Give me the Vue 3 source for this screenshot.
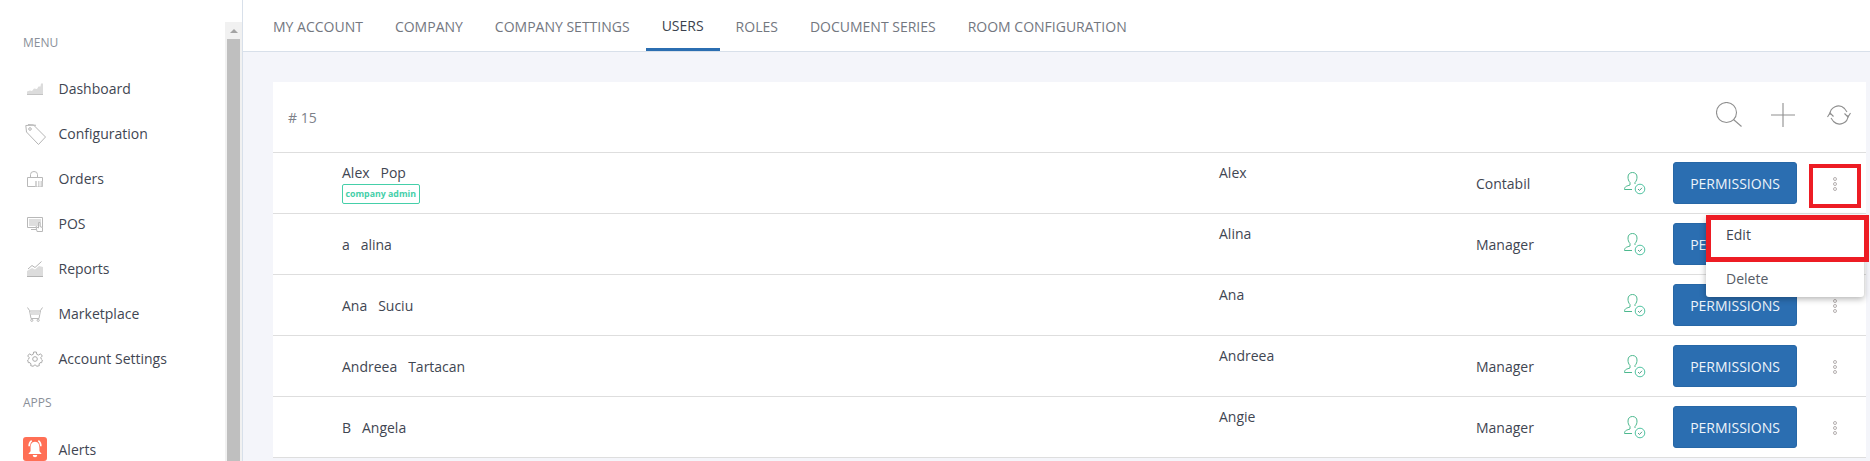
<script setup>
const menu = [
  { label: 'Dashboard', icon: 'dash' },
  { label: 'Configuration', icon: 'tag' },
  { label: 'Orders', icon: 'bag' },
  { label: 'POS', icon: 'pos' },
  { label: 'Reports', icon: 'reports' },
  { label: 'Marketplace', icon: 'cart' },
  { label: 'Account Settings', icon: 'gear' }
]
const tabs = ['MY ACCOUNT', 'COMPANY', 'COMPANY SETTINGS', 'USERS', 'ROLES', 'DOCUMENT SERIES', 'ROOM CONFIGURATION']
const users = [
  { first: 'Alex', last: 'Pop', nick: 'Alex', role: 'Contabil', admin: true },
  { first: 'a', last: 'alina', nick: 'Alina', role: 'Manager' },
  { first: 'Ana', last: 'Suciu', nick: 'Ana', role: '' },
  { first: 'Andreea', last: 'Tartacan', nick: 'Andreea', role: 'Manager' },
  { first: 'B', last: 'Angela', nick: 'Angie', role: 'Manager' }
]
</script>

<template>
  <div class="page">
    <aside class="sidebar">
      <div class="section first">MENU</div>
      <a v-for="m in menu" :key="m.label" class="nav">
        <span class="nav-icon">
          <svg v-if="m.icon === 'dash'" width="16" height="12" viewBox="0 0 16 12"><path d="M0 11V8.500L3 7.500 5 8 7 5.500 10 6 11.500 3.500 13.500 3.500 14 .5 16 .5V11z" fill="#dcdcdc"/><path d="M0 11.500H16" stroke="#c4c4c4"/></svg>
          <svg v-else-if="m.icon === 'tag'" width="21" height="21" viewBox="0 0 21 21" fill="none" stroke="#b4b4b4"><path d="M.8 1.500 8.500 1 20.500 13 13.500 20.500 1.500 8z"/><circle cx="5" cy="5" r="1.300"/><path d="M3 .6 11 1.300"/></svg>
          <svg v-else-if="m.icon === 'bag'" width="16" height="16" viewBox="0 0 16 16" fill="none" stroke="#b8b8b8"><path d="M.5 6.500H15.500V15.500H.5z"/><path d="M3.500 6.500V3.500a3.500 3 0 0 1 7 0V6.500"/><path d="M8 10H15.500V15.500H8z" fill="#d4d4d4" stroke="none"/><path d="M10.500 10V15.500M13 10V15.500" stroke="#fff"/></svg>
          <svg v-else-if="m.icon === 'pos'" width="16" height="15" viewBox="0 0 16 15" fill="none" stroke="#b8b8b8"><path d="M.5.5H15.500V10.500H.5z"/><path d="M2 2H14V9H2z" fill="#dedede" stroke="none"/><path d="M4 12.500H9"/><path d="M10 14.500 9 9.500 11.500 11V5.500H13V9.500L15.500 10.500V14.500z" fill="#fff"/></svg>
          <svg v-else-if="m.icon === 'reports'" width="16" height="16" viewBox="0 0 16 16"><path d="M0 15V10L5 7 8 8.500 12 5 16 6V15z" fill="#dcdcdc"/><path d="M1 8 5 4.500 8 6.500 14.500 .5" fill="none" stroke="#b4b4b4"/><path d="M0 15.500H16" stroke="#b4b4b4"/></svg>
          <svg v-else-if="m.icon === 'cart'" width="16" height="15" viewBox="0 0 16 15" fill="none" stroke="#b8b8b8"><path d="M.5.5 2.500 3.500 4 11.500H12L13.500 3.500 15.500.5"/><path d="M2.500 4H13.500"/><path d="M3.500 4.500H12.500V8H4z" fill="#dedede" stroke="none"/><circle cx="4.800" cy="13.300" r="1.100"/><circle cx="11.200" cy="13.300" r="1.100"/></svg>
          <svg v-else-if="m.icon === 'gear'" width="16" height="16" viewBox="0 0 24 24" fill="none" stroke="#aaa" stroke-width="1.500"><circle cx="12" cy="12" r="3.500"/><path d="M10 1.500H14L14.700 5 17.300 6.100 20.300 4.200 23 7.500 20.700 9.800 21.400 12 23 13.500 22 17.500 19.500 17.500 18 19.500 18.500 22 14.500 23 13 21H11L9.500 23 5.500 22 6 19.500 4.500 17.500 2 17.500 1 13.500 2.600 12 3.300 9.800 1 7.500 3.700 4.200 6.700 6.100 9.300 5z"/></svg>
        </span>
        <span>{{ m.label }}</span>
      </a>
      <div class="section apps">APPS</div>
      <a class="nav alerts">
        <span class="alert-icon">
          <svg width="20" height="20" viewBox="0 0 18 18" fill="#fff"><path d="M9 2.500C6 2.500 5 5 5 8V11L3 13.500H15L13 11V8C13 5 12 2.500 9 2.500z"/><path d="M7 14.500H11A2 2 0 0 1 7 14.500z"/><path d="M3.700 6.500A6 6 0 0 1 6 1.500M14.300 6.500A6 6 0 0 0 12 1.500" fill="none" stroke="#fff" stroke-width="1.400"/></svg>
        </span>
        <span>Alerts</span>
      </a>
      <div class="scrollbar">
        <div class="arrow"></div>
        <div class="thumb"></div>
      </div>
    </aside>

    <main class="main">
      <nav class="tabs">
        <a v-for="t in tabs" :key="t" class="tab" :class="{ active: t === 'USERS' }">{{ t }}</a>
      </nav>
      <section class="content">
        <div class="card">
          <header class="card-head">
            <span class="count"># 15</span>
            <div class="tools">
              <svg width="26" height="25" viewBox="0 0 26 25" fill="none" stroke="#8f8f8f" stroke-width="1.100"><circle cx="10.500" cy="10.500" r="10"/><path d="M17.500 17.500 25.500 24.500"/></svg>
              <svg class="tool-plus" width="24" height="24" viewBox="0 0 24 24" fill="none" stroke="#8f8f8f" stroke-width="1.100"><path d="M12 0V24M0 12H24"/></svg>
              <svg class="tool-sync" width="24" height="20" viewBox="0 0 24 20" fill="none" stroke="#8f8f8f" stroke-width="1.100"><path d="M3 10A8.500 8.500 0 0 1 17.500 3.500L20 7M21 10A8.500 8.500 0 0 1 6.500 16.500L4 13"/><path d="M.5 12 3 8 6.500 11.500M23.500 8 21 12 17.500 8.500"/></svg>
            </div>
          </header>
          <div v-for="u in users" :key="u.first" class="row">
            <div class="name">
              <span class="full">{{ u.first }}&nbsp;&nbsp; {{ u.last }}</span>
              <span v-if="u.admin" class="badge">company admin</span>
            </div>
            <div class="nick">{{ u.nick }}</div>
            <div class="role">{{ u.role }}</div>
            <div class="status">
              <svg width="22" height="23" viewBox="0 0 22 23" fill="none" stroke="#4cb88e"><path d="M.5 17.500C.5 14 3.500 14 6 13V10.500C4.500 9 4 7 4 5 4 2 6 .5 8.500 .5S13 2 13 5C13 7 12.500 9 11 10.500V12"/><path d="M.5 17.500H8"/><circle cx="16" cy="17" r="4.800" stroke="#4fc3a1"/><path d="M14 17 15.500 18.500 18 15.800" stroke="#5a9e8a"/></svg>
            </div>
            <div class="action"><button class="perm">PERMISSIONS</button></div>
            <div class="dots"><i></i><i></i><i></i></div>
          </div>
        </div>
      </section>
    </main>

    <div class="menu">
      <div class="menu-item">Edit</div>
      <div class="menu-item">Delete</div>
    </div>
    <div class="mark mark-dots"></div>
    <div class="mark mark-edit"></div>
  </div>
</template>

<style>
html, body { margin: 0; background: #fff; overflow: hidden; }
</style>

<style scoped>
.page {
  position: relative;
  display: flex;
  width: 1870px;
  height: 461px;
  overflow: hidden;
  font-family: "Open Sans", sans-serif;
  font-size: 14px;
  color: #3f4652;
}
.sidebar {
  position: relative;
  flex: 0 0 242px;
  border-right: 1px solid #d8e0ea;
  background: #fff;
  overflow: hidden;
}
.section {
  padding-left: 23px;
  font-size: 12px;
  line-height: 16px;
  color: #8a8f99;
}
.first { margin-top: 35px; margin-bottom: 15px; }
.apps { margin-top: 14px; margin-bottom: 26px; }
.nav {
  display: flex;
  align-items: center;
  height: 45px;
  padding-left: 23px;
  font-size: 14px;
}
.nav-icon {
  display: flex;
  align-items: center;
  justify-content: center;
  flex: 0 0 24px;
  height: 24px;
  margin: 1px 11.500px 0 0;
}
.alerts { height: 24px; }
.alert-icon {
  display: flex;
  align-items: center;
  justify-content: center;
  flex: 0 0 24px;
  height: 24px;
  margin-right: 11.500px;
  border-radius: 3px;
  background: #ff6f55;
}
.scrollbar {
  position: absolute;
  top: 22px;
  left: 225px;
  bottom: 0;
  width: 17px;
  background: #f1f1f1;
}
.arrow {
  width: 0;
  height: 0;
  margin: 7px auto 6px;
  border-left: 4px solid transparent;
  border-right: 4px solid transparent;
  border-bottom: 4px solid #a3a3a3;
}
.thumb {
  height: 430px;
  margin: 0 2px;
  background: #bfbfbf;
}
.main {
  flex: 1;
  min-width: 0;
  background: #f4f5fa;
}
.tabs {
  display: flex;
  height: 51px;
  padding-left: 14px;
  background: #fff;
  border-bottom: 1px solid #d8e0ea;
}
.tab {
  display: flex;
  align-items: center;
  height: 51px;
  box-sizing: border-box;
  padding: 2px 16px 0;
  font-size: 14px;
  color: #73777f;
}
.tab.active {
  color: #3b424e;
  border-bottom: 3px solid #2b6eb1;
  padding-top: 3px;
}
.content {
  padding: 30px 4px 0 30px;
}
.card {
  background: #fff;
}
.card-head {
  display: flex;
  align-items: center;
  justify-content: space-between;
  height: 71px;
  padding: 0 15px;
  border-bottom: 1px solid #dedede;
  box-sizing: border-box;
}
.count { font-size: 14px; color: #7d8189; }
.tools {
  display: flex;
  align-items: center;
  margin-top: -5px;
}
.tool-plus { margin-left: 29px; }
.tool-sync { margin-left: 32px; }
.row {
  display: grid;
  grid-template-columns: 877px 257px 146px 51px 124px 1fr;
  height: 61px;
  padding-left: 69px;
  box-sizing: border-box;
  border-bottom: 1px solid #dedede;
  align-items: center;
}
.name { display: flex; flex-direction: column; align-items: flex-start; margin-top: 1px; }
.full { line-height: 19px; color: #3f4652; }
.badge {
  margin-top: 2px;
  height: 20px;
  line-height: 18px;
  box-sizing: border-box;
  padding: 0 2.500px;
  border: 1px solid #45cfa9;
  border-radius: 2px;
  font-size: 8.800px;
  font-weight: 700;
  color: #45cfa9;
}
.nick { align-self: start; margin-top: 10px; line-height: 19px; }
.status { display: flex; margin-left: 2px; }
.perm {
  display: block;
  width: 124px;
  height: 42px;
  padding: 0;
  border: 1px solid #2767a6;
  border-radius: 3px;
  background: #2b6eb1;
  color: #eef4fa;
  font: 14px "Open Sans", sans-serif;
}
.dots {
  display: flex;
  flex-direction: column;
  align-items: center;
  gap: 1px;
  margin: 1px 0 0 7px;
  width: 62px;
}
.dots i {
  width: 4px;
  height: 4px;
  box-sizing: border-box;
  border: 1px solid #b5afaf;
  border-radius: 50%;
}
.menu {
  position: absolute;
  top: 216px;
  left: 1706px;
  width: 158px;
  height: 81px;
  padding-top: 1px;
  box-sizing: border-box;
  background: #fff;
  border-radius: 3px;
  box-shadow: 0 2px 6px rgba(0, 0, 0, .3);
}
.menu-item {
  height: 40px;
  padding-left: 20px;
  line-height: 35px;
  font-size: 14px;
}
.menu-item + .menu-item { line-height: 44px; color: #555b66; }
.mark {
  position: absolute;
  box-sizing: border-box;
  border-style: solid;
  border-color: #ed1c24;
}
.mark-dots { left: 1809px; top: 164px; width: 52px; height: 44px; border-width: 4px; }
.mark-edit { left: 1706px; top: 215px; width: 163px; height: 47px; border-width: 5px; }
</style>
